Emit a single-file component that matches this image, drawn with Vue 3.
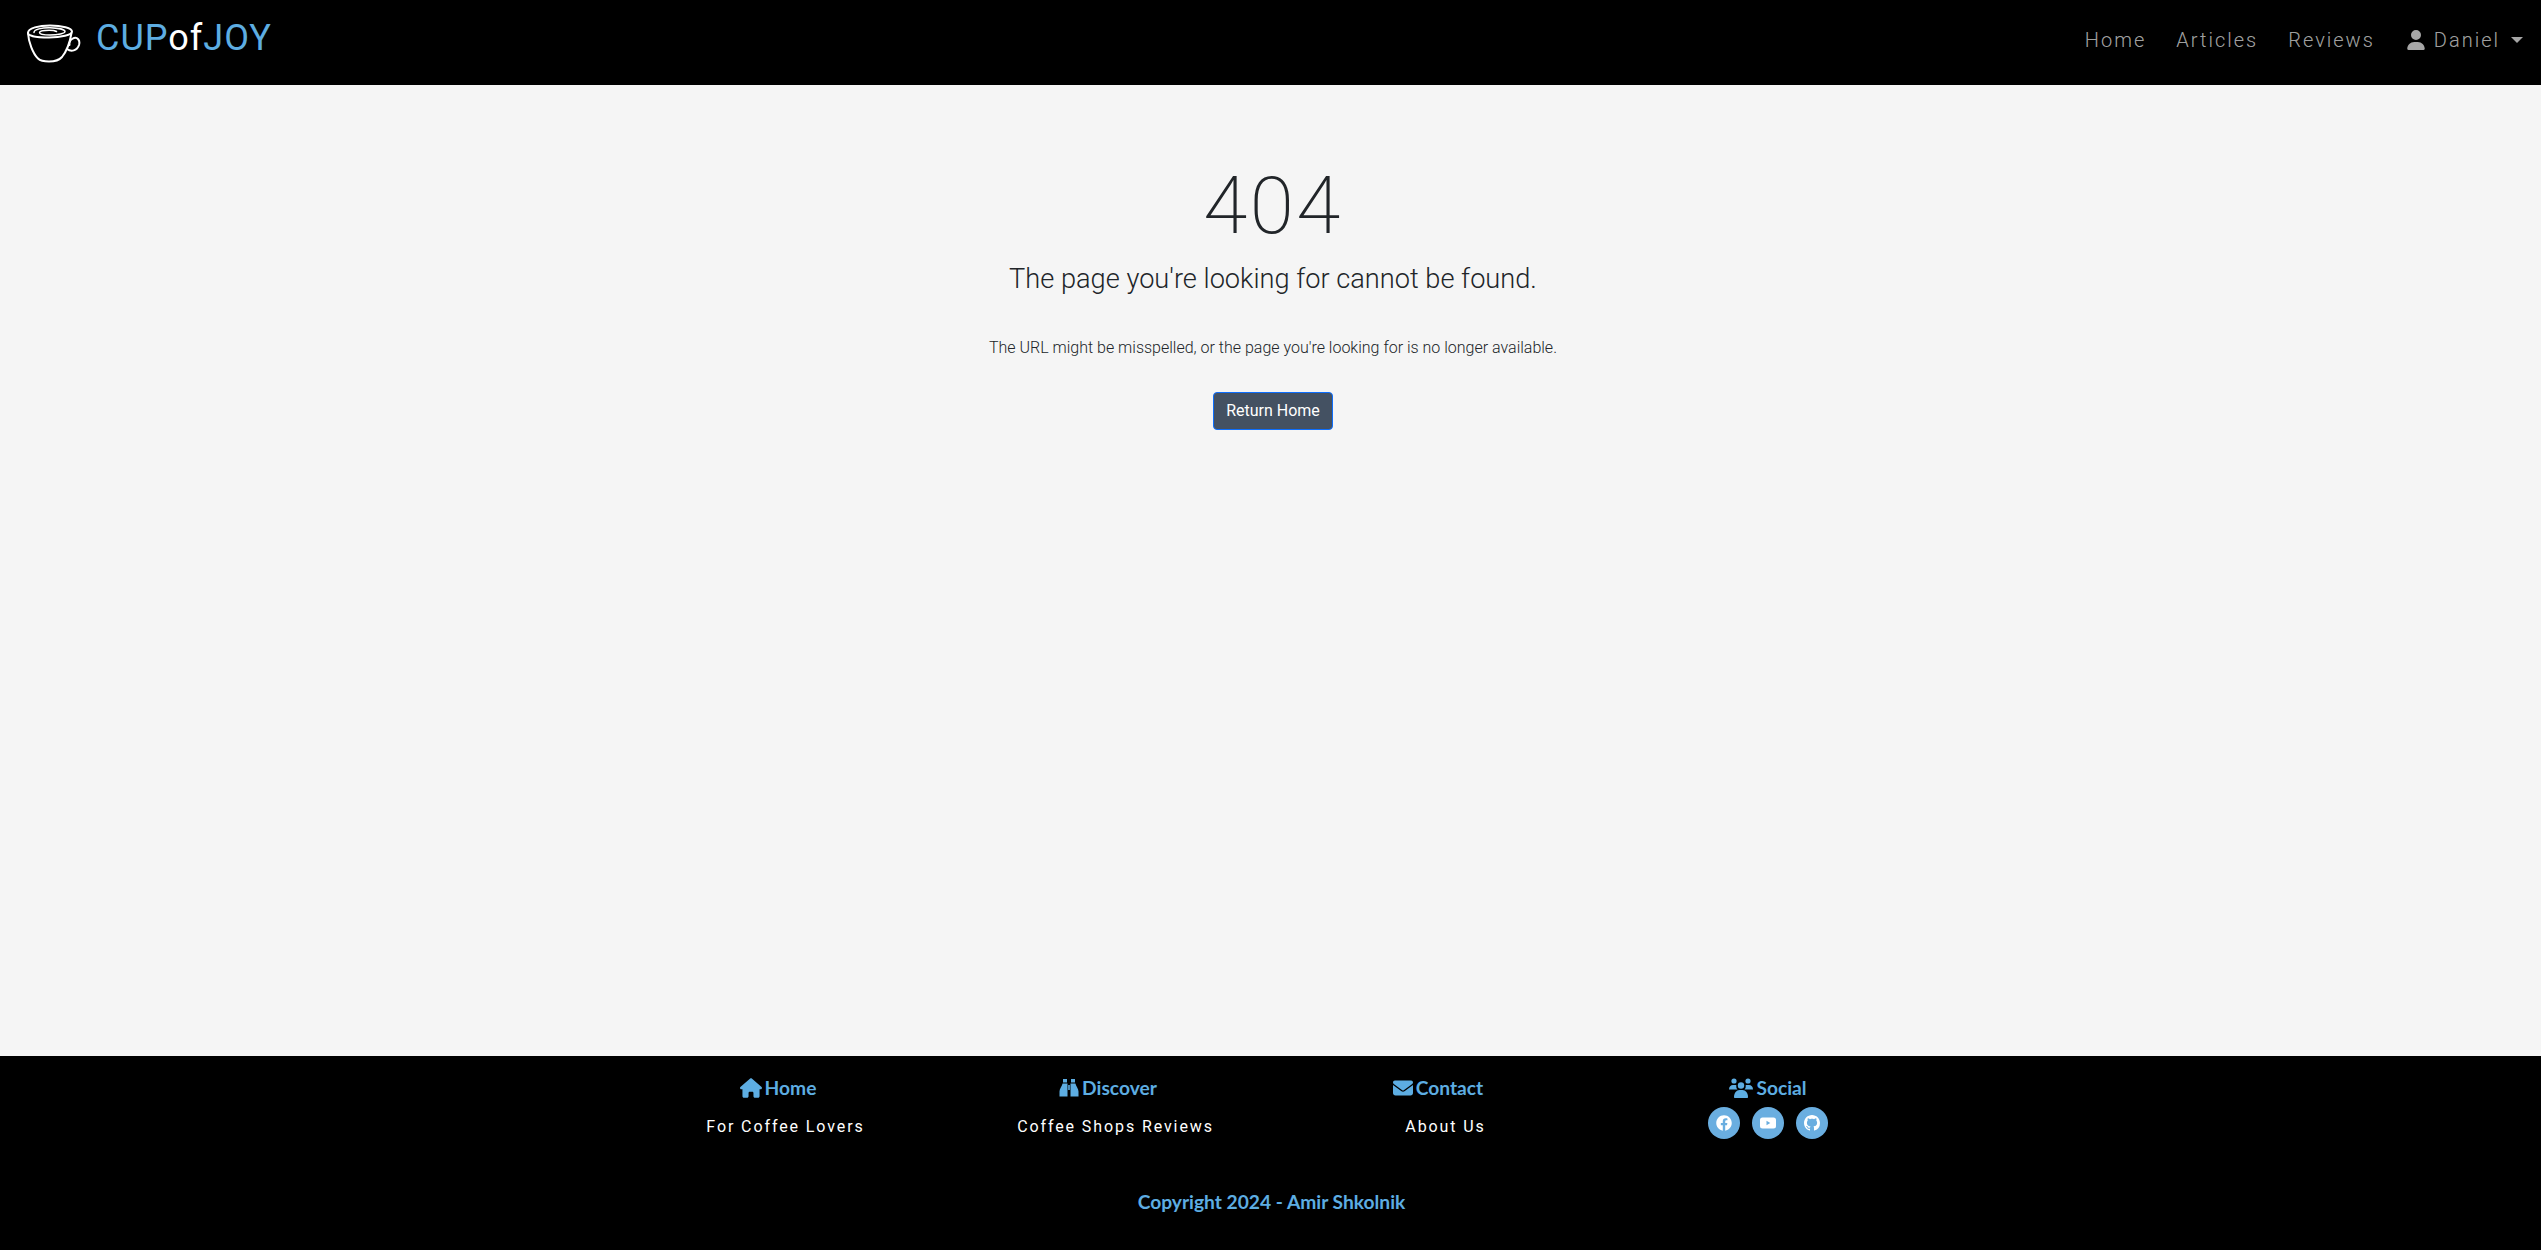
<template>
  <div class="page">
    <!-- navbar -->
    <header class="navbar">
      <a class="brand" href="#">
        <svg class="cup" width="54" height="40" viewBox="0 0 54 40" fill="none" stroke="#fff" stroke-width="2" stroke-linecap="round">
          <path d="M1 9C1 4 12 1.500 23 1.500 35 1.500 45 4 45 7.500 45 11 34 13.500 22 13.500 10 13.500 1 12 1 9Z" />
          <path d="M1 9C1.500 18 6 30 11 34.500 13 36.500 16 37.500 22 37.500 28 37.500 32 36.500 35 33 39 28 43 18 44.500 9" />
          <path d="M7 8.500C7 5.500 15 3.500 23 3.700 31 3.900 38 5.500 38 7.500c0 2-7 3.500-15 3.500-6 0-10.500-1-10.500-2.500 0-1.300 4.500-2.300 9.500-2.300 3 0 6 .4 7.500 1.300" stroke-width="1.500" />
          <path d="M40 25C44 28 50 27 52 21 53.500 16 50 13 47 14 44 15 42 18 42.500 21" />
        </svg>
        <span class="brand-text">CUP<span class="brand-of">of</span>JOY</span>
      </a>
      <nav class="nav-links">
        <a href="#">Home</a>
        <a href="#">Articles</a>
        <a href="#">Reviews</a>
        <a href="#" class="user-link">
          <svg width="18" height="20" viewBox="0 0 448 512" fill="currentColor">
            <path d="M224 256A128 128 0 1 0 224 0a128 128 0 1 0 0 256zm-45.700 48C79.800 304 0 383.800 0 482.300C0 498.700 13.300 512 29.700 512H418.300c16.400 0 29.700-13.300 29.700-29.700C448 383.800 368.200 304 269.700 304H178.300z" />
          </svg>
          <span>Daniel</span>
          <i class="caret"></i>
        </a>
      </nav>
    </header>

    <!-- content -->
    <main class="content">
      <h1 class="code">404</h1>
      <h3 class="title">The page you're looking for cannot be found.</h3>
      <p class="hint">The URL might be misspelled, or the page you're looking for is no longer available.</p>
      <a class="btn" href="#">Return Home</a>
    </main>

    <!-- footer -->
    <footer class="footer">
      <div class="columns">
        <div class="column">
          <h5 class="col-head">
            <svg width="22" height="20" viewBox="0 0 576 512" fill="currentColor">
              <path d="M575.800 255.500c0 18-15 32.100-32 32.100h-32l.7 160.200c0 2.700-.2 5.400-.5 8.100V472c0 22.100-17.900 40-40 40H456c-1.100 0-2.200 0-3.300-.1c-1.400 .1-2.800 .1-4.200 .1H416 392c-22.100 0-40-17.900-40-40V448 384c0-17.700-14.300-32-32-32H256c-17.700 0-32 14.300-32 32v64 24c0 22.100-17.900 40-40 40H160 128.100c-1.500 0-3-.1-4.500-.2c-1.200 .1-2.400 .2-3.600 .2H104c-22.100 0-40-17.900-40-40V360c0-.9 0-1.900 .1-2.800V287.600H32c-18 0-32-14-32-32.100c0-9 3-17 10-24L266.400 8c7-7 15-8 22-8s15 2 21 7L564.800 231.500c8 7 12 15 11 24z" />
            </svg>
            Home
          </h5>
          <a class="col-link" href="#">For Coffee Lovers</a>
        </div>
        <div class="column">
          <h5 class="col-head">
            <svg width="20" height="20" viewBox="0 0 20 20" fill="currentColor">
              <path d="M4 1h4v3.500H4zM12 1h4v3.500h-4z" />
              <path d="M3.600 5.500H8.500V18.500H.5V13.500C.5 10.500 3 8.500 3.600 5.500Z" />
              <path d="M11.500 5.500H16.400C17 8.500 19.500 10.500 19.500 13.500V18.500H11.500Z" />
              <path d="M9.200 7h1.600v5H9.200z" />
            </svg>
            Discover
          </h5>
          <a class="col-link" href="#">Coffee Shops Reviews</a>
        </div>
        <div class="column">
          <h5 class="col-head">
            <svg width="20" height="20" viewBox="0 0 512 512" fill="currentColor">
              <path d="M48 64C21.500 64 0 85.500 0 112c0 15.100 7.100 29.300 19.200 38.400L236.800 313.600c11.400 8.500 27 8.500 38.400 0L492.800 150.400c12.100-9.100 19.200-23.300 19.200-38.400c0-26.500-21.500-48-48-48H48zM0 176V384c0 35.300 28.700 64 64 64H448c35.300 0 64-28.700 64-64V176L294.400 339.200c-22.800 17.100-54 17.100-76.800 0L0 176z" />
            </svg>
            Contact
          </h5>
          <a class="col-link" href="#">About Us</a>
        </div>
        <div class="column">
          <h5 class="col-head">
            <svg width="24" height="20" viewBox="0 0 24 20" fill="currentColor">
              <circle cx="5" cy="3" r="2.600" />
              <circle cx="19" cy="3" r="2.600" />
              <circle cx="12" cy="7.500" r="3.200" />
              <path d="M0 11.500C0 8.500 1.800 7 4 7h2c.7 0 1 .2 1.400.4C7 9 7.500 10.500 8.500 11.500H.5ZM23.500 11.500h-8c1-1 1.500-2.500 1.100-4.100C17 7.200 17.300 7 18 7h2c2.200 0 4 1.500 4 4.500Z" />
              <path d="M5 19c0-4 2.500-7 5.500-7h3c3 0 5.500 3 5.500 7 0 .6-.4 1-1 1H6c-.6 0-1-.4-1-1Z" />
            </svg>
            Social
          </h5>
          <div class="socials">
            <a class="social" href="#" aria-label="Facebook">
              <svg width="16" height="16" viewBox="0 0 512 512" fill="#fff">
                <path d="M504 256C504 119 393 8 256 8S8 119 8 256c0 123.780 90.690 226.380 209.250 245V327.690h-63V256h63v-54.640c0-62.150 37-96.480 93.670-96.480 27.140 0 55.520 4.840 55.520 4.840v61h-31.280c-30.800 0-40.410 19.120-40.410 38.730V256h68.780l-11 71.690h-57.780V501C413.310 482.380 504 379.780 504 256z" />
              </svg>
            </a>
            <a class="social" href="#" aria-label="YouTube">
              <svg width="16" height="16" viewBox="0 0 16 16" fill="#fff">
                <path fill-rule="evenodd" d="M2.500 2.500h11A2.500 2.500 0 0 1 16 5v6a2.500 2.500 0 0 1-2.500 2.500h-11A2.500 2.500 0 0 1 0 11V5a2.500 2.500 0 0 1 2.500-2.500ZM6.500 5.800v4.400L10.300 8Z" />
              </svg>
            </a>
            <a class="social" href="#" aria-label="GitHub">
              <svg width="16" height="16" viewBox="0 0 16 16" fill="#fff">
                <path d="M8 0C3.580 0 0 3.580 0 8c0 3.540 2.290 6.530 5.470 7.590.4.070.55-.17.55-.38 0-.19-.01-.82-.01-1.490-2.010.37-2.530-.49-2.690-.94-.09-.23-.48-.94-.82-1.130-.28-.15-.68-.52-.01-.53.630-.01 1.080.58 1.230.82.72 1.210 1.870.87 2.330.66.070-.52.28-.87.51-1.070-1.780-.2-3.640-.89-3.640-3.950 0-.87.31-1.590.82-2.150-.08-.2-.36-1.020.08-2.120 0 0 .67-.21 2.200.82.64-.18 1.320-.27 2-.27.68 0 1.360.09 2 .27 1.530-1.040 2.200-.82 2.200-.82.44 1.100.16 1.920.08 2.120.51.56.82 1.270.82 2.150 0 3.070-1.870 3.750-3.650 3.950.29.25.54.73.54 1.480 0 1.070-.01 1.930-.01 2.200 0 .21.15.46.55.38A8.012 8.012 0 0 0 16 8c0-4.420-3.580-8-8-8z" />
              </svg>
            </a>
          </div>
        </div>
      </div>
      <p class="copyright">Copyright 2024 - Amir Shkolnik</p>
    </footer>
  </div>
</template>

<script setup>
</script>

<style>
body {
  margin: 0;
  background: #f5f5f5;
}
</style>

<style scoped>
.page {
  display: flex;
  flex-direction: column;
  min-height: 100vh;
  font-family: Roboto, "Liberation Sans", sans-serif;
}

a {
  text-decoration: none;
}

/* navbar */
.navbar {
  display: flex;
  align-items: center;
  justify-content: space-between;
  height: 85px;
  background: #000;
  padding: 0 18px 0 27px;
  flex-shrink: 0;
}

.brand {
  display: flex;
  align-items: center;
  gap: 15px;
  margin-top: 3px;
}

.brand-text {
  font-size: 36px;
  line-height: 1;
  letter-spacing: 1px;
  color: #5dade2;
  margin-top: -13px;
}

.brand-of {
  color: #fff;
}

.nav-links {
  display: flex;
  align-items: center;
  gap: 30px;
  margin-top: -6px;
}

.nav-links a {
  color: rgba(255, 255, 255, 0.65);
  font-size: 20px;
  font-weight: 300;
  letter-spacing: 2px;
}

.nav-links .user-link {
  display: flex;
  align-items: center;
  gap: 9px;
  margin-left: 2px;
}

.caret {
  width: 0;
  height: 0;
  margin-left: 2px;
  border-top: 6px solid currentColor;
  border-left: 6px solid transparent;
  border-right: 6px solid transparent;
}

/* content */
.content {
  flex: 1;
  display: flex;
  flex-direction: column;
  align-items: center;
  padding: 73px 0 0 5px;
  color: #212529;
}

.code {
  margin: 0;
  font-size: 80px;
  font-weight: 200;
  line-height: 1.2;
  letter-spacing: 2.5px;
}

.title {
  margin: 9px 0 0;
  font-size: 27.2px;
  font-weight: 300;
  line-height: 1.2;
}

.hint {
  margin: 40px 0 0;
  font-size: 16px;
  font-weight: 300;
  line-height: 1.5;
}

.btn {
  margin-top: 32px;
  padding: 6px 12px;
  font-size: 16px;
  font-weight: 400;
  line-height: 24px;
  color: #fff;
  background: #445162;
  border: 1px solid #0d6efd;
  border-radius: 4px;
}

/* footer */
.footer {
  background: #000;
  flex-shrink: 0;
  height: 194px;
  box-sizing: border-box;
  padding-top: 20px;
}

.columns {
  display: grid;
  grid-template-columns: repeat(4, 330px);
  justify-content: center;
}

.column {
  display: flex;
  flex-direction: column;
  align-items: center;
}

.col-head {
  display: flex;
  align-items: center;
  gap: 3px;
  margin: 0;
  padding-left: 5px;
  font-family: Lato, "Liberation Sans", sans-serif;
  font-size: 19.2px;
  font-weight: 700;
  line-height: 24px;
  color: #5dade2;
}

.col-link {
  margin-top: 15px;
  padding-left: 20px;
  font-size: 16px;
  font-weight: 400;
  line-height: 24px;
  letter-spacing: 1.9px;
  color: #fff;
}

.socials {
  display: flex;
  gap: 12px;
  margin-top: 7px;
  padding-left: 5px;
}

.social {
  display: flex;
  align-items: center;
  justify-content: center;
  width: 32px;
  height: 32px;
  border-radius: 50%;
  background: #6aaee0;
}

.copyright {
  margin: 51px 0 0;
  padding-left: 2px;
  text-align: center;
  font-family: Lato, "Liberation Sans", sans-serif;
  font-size: 19.2px;
  font-weight: 700;
  line-height: 24px;
  color: #5dade2;
}
</style>
